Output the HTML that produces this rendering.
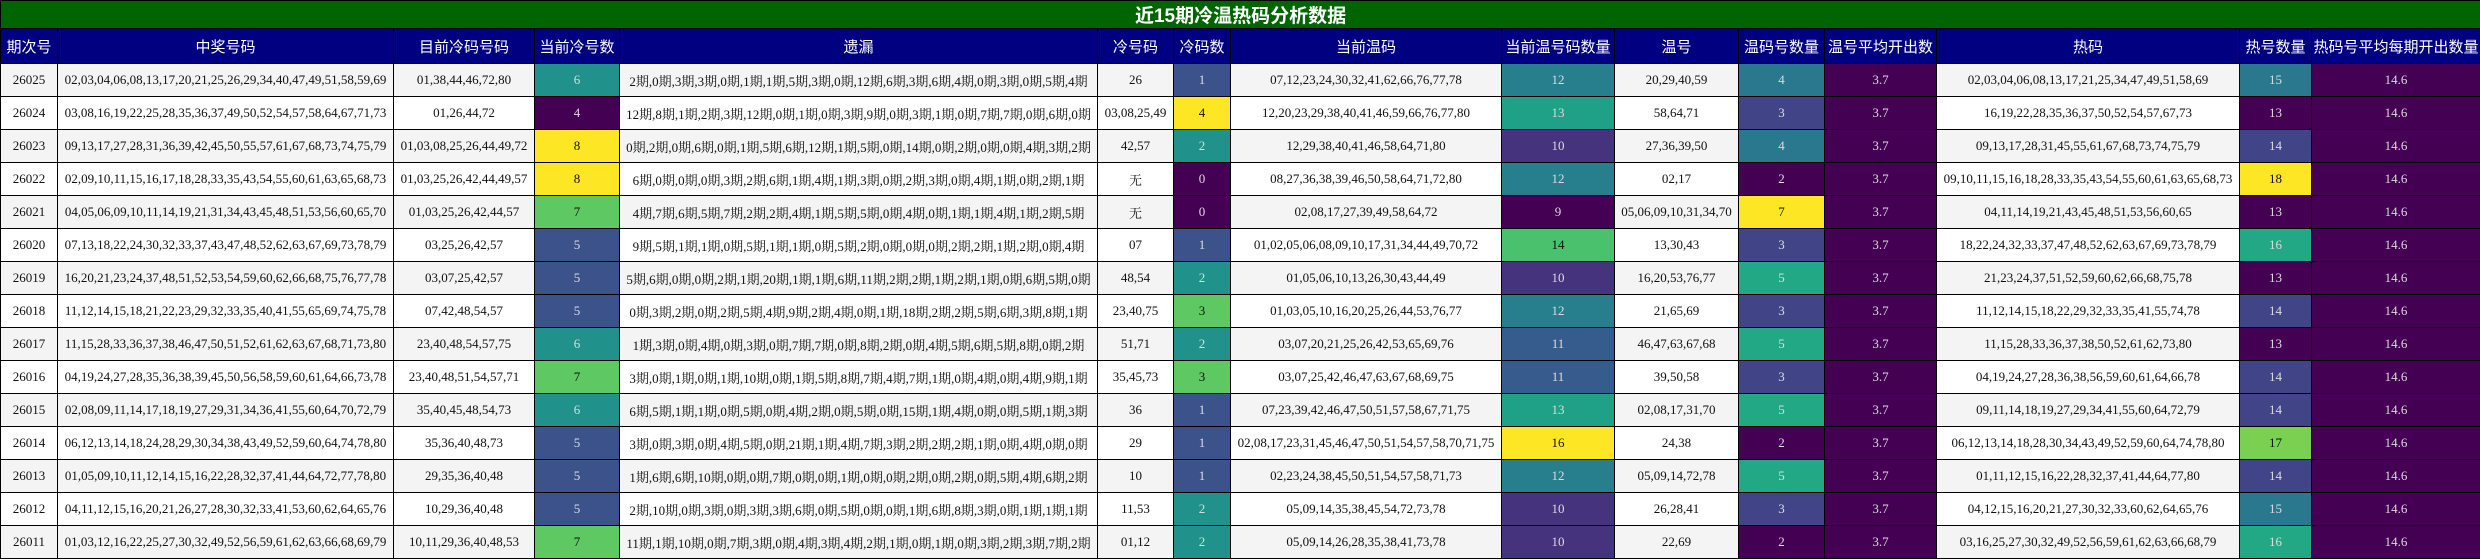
<!DOCTYPE html>
<html><head><meta charset="utf-8">
<style>
html,body{margin:0;padding:0;background:#fff;width:2480px;height:560px;overflow:hidden}
table{border-collapse:collapse;table-layout:fixed;width:2480px}
td,th{border:1px solid #000;padding:0;text-align:center;white-space:nowrap;overflow:hidden}
.tt td{height:27px;background:#006400;color:#fff;font:bold 19px "Liberation Sans","Noto Sans CJK SC",sans-serif}
.hd th{height:34px;background:#000080;color:#fff;font-weight:normal;font-size:15px;font-family:"Liberation Sans","Noto Sans CJK SC",sans-serif}
tbody tr td{height:32px;font-size:13px;font-family:"Liberation Serif","Noto Serif CJK SC",serif;color:#111}
tbody tr:nth-child(odd) td{background:#f4f4f4}
tbody tr:nth-child(even) td{background:#fff}
.p{background:#440154!important}.b{background:#3b528b!important}.t{background:#21918c!important}
.g{background:#5ec962!important}.y{background:#fde725!important}.i{background:#414487!important}
.u{background:#2a788e!important}.e{background:#22a884!important}.l{background:#7ad151!important}
.m{background:#46337e!important}.n{background:#365c8d!important}.o{background:#277f8e!important}
.q{background:#1fa187!important}.r{background:#4ac16d!important}
.p,.b,.t,.i,.u,.e,.m,.n,.o,.q{color:#dcdcdc!important}
</style></head><body>
<table>
<colgroup><col style="width:57px"><col style="width:336px"><col style="width:141px"><col style="width:85px"><col style="width:478px"><col style="width:76px"><col style="width:57px"><col style="width:271px"><col style="width:113px"><col style="width:124px"><col style="width:86px"><col style="width:112px"><col style="width:303px"><col style="width:72px"><col style="width:169px"></colgroup>
<thead>
<tr class="tt"><td colspan="15">近15期冷温热码分析数据</td></tr>
<tr class="hd"><th>期次号</th><th>中奖号码</th><th>目前冷码号码</th><th>当前冷号数</th><th>遗漏</th><th>冷号码</th><th>冷码数</th><th>当前温码</th><th>当前温号码数量</th><th>温号</th><th>温码号数量</th><th>温号平均开出数</th><th>热码</th><th>热号数量</th><th>热码号平均每期开出数量</th></tr>
</thead>
<tbody>
<tr><td>26025</td><td>02,03,04,06,08,13,17,20,21,25,26,29,34,40,47,49,51,58,59,69</td><td>01,38,44,46,72,80</td><td class="t">6</td><td>2期,0期,3期,3期,0期,1期,1期,5期,3期,0期,12期,6期,3期,6期,4期,0期,3期,0期,5期,4期</td><td>26</td><td class="b">1</td><td>07,12,23,24,30,32,41,62,66,76,77,78</td><td class="o">12</td><td>20,29,40,59</td><td class="u">4</td><td class="p">3.7</td><td>02,03,04,06,08,13,17,21,25,34,47,49,51,58,69</td><td class="u">15</td><td class="p">14.6</td></tr>
<tr><td>26024</td><td>03,08,16,19,22,25,28,35,36,37,49,50,52,54,57,58,64,67,71,73</td><td>01,26,44,72</td><td class="p">4</td><td>12期,8期,1期,2期,3期,12期,0期,1期,0期,3期,9期,0期,3期,1期,0期,7期,7期,0期,6期,0期</td><td>03,08,25,49</td><td class="y">4</td><td>12,20,23,29,38,40,41,46,59,66,76,77,80</td><td class="q">13</td><td>58,64,71</td><td class="i">3</td><td class="p">3.7</td><td>16,19,22,28,35,36,37,50,52,54,57,67,73</td><td class="p">13</td><td class="p">14.6</td></tr>
<tr><td>26023</td><td>09,13,17,27,28,31,36,39,42,45,50,55,57,61,67,68,73,74,75,79</td><td>01,03,08,25,26,44,49,72</td><td class="y">8</td><td>0期,2期,0期,6期,0期,1期,5期,6期,12期,1期,5期,0期,14期,0期,2期,0期,0期,4期,3期,2期</td><td>42,57</td><td class="t">2</td><td>12,29,38,40,41,46,58,64,71,80</td><td class="m">10</td><td>27,36,39,50</td><td class="u">4</td><td class="p">3.7</td><td>09,13,17,28,31,45,55,61,67,68,73,74,75,79</td><td class="i">14</td><td class="p">14.6</td></tr>
<tr><td>26022</td><td>02,09,10,11,15,16,17,18,28,33,35,43,54,55,60,61,63,65,68,73</td><td>01,03,25,26,42,44,49,57</td><td class="y">8</td><td>6期,0期,0期,0期,3期,2期,6期,1期,4期,1期,3期,0期,2期,3期,0期,4期,1期,0期,2期,1期</td><td>无</td><td class="p">0</td><td>08,27,36,38,39,46,50,58,64,71,72,80</td><td class="o">12</td><td>02,17</td><td class="p">2</td><td class="p">3.7</td><td>09,10,11,15,16,18,28,33,35,43,54,55,60,61,63,65,68,73</td><td class="y">18</td><td class="p">14.6</td></tr>
<tr><td>26021</td><td>04,05,06,09,10,11,14,19,21,31,34,43,45,48,51,53,56,60,65,70</td><td>01,03,25,26,42,44,57</td><td class="g">7</td><td>4期,7期,6期,5期,7期,2期,2期,4期,1期,5期,5期,0期,4期,0期,1期,1期,4期,1期,2期,5期</td><td>无</td><td class="p">0</td><td>02,08,17,27,39,49,58,64,72</td><td class="p">9</td><td>05,06,09,10,31,34,70</td><td class="y">7</td><td class="p">3.7</td><td>04,11,14,19,21,43,45,48,51,53,56,60,65</td><td class="p">13</td><td class="p">14.6</td></tr>
<tr><td>26020</td><td>07,13,18,22,24,30,32,33,37,43,47,48,52,62,63,67,69,73,78,79</td><td>03,25,26,42,57</td><td class="b">5</td><td>9期,5期,1期,1期,0期,5期,1期,1期,0期,5期,2期,0期,0期,0期,2期,2期,1期,2期,0期,4期</td><td>07</td><td class="b">1</td><td>01,02,05,06,08,09,10,17,31,34,44,49,70,72</td><td class="r">14</td><td>13,30,43</td><td class="i">3</td><td class="p">3.7</td><td>18,22,24,32,33,37,47,48,52,62,63,67,69,73,78,79</td><td class="e">16</td><td class="p">14.6</td></tr>
<tr><td>26019</td><td>16,20,21,23,24,37,48,51,52,53,54,59,60,62,66,68,75,76,77,78</td><td>03,07,25,42,57</td><td class="b">5</td><td>5期,6期,0期,0期,2期,1期,20期,1期,1期,6期,11期,2期,2期,1期,2期,1期,0期,6期,5期,0期</td><td>48,54</td><td class="t">2</td><td>01,05,06,10,13,26,30,43,44,49</td><td class="m">10</td><td>16,20,53,76,77</td><td class="e">5</td><td class="p">3.7</td><td>21,23,24,37,51,52,59,60,62,66,68,75,78</td><td class="p">13</td><td class="p">14.6</td></tr>
<tr><td>26018</td><td>11,12,14,15,18,21,22,23,29,32,33,35,40,41,55,65,69,74,75,78</td><td>07,42,48,54,57</td><td class="b">5</td><td>0期,3期,2期,0期,2期,5期,4期,9期,2期,4期,0期,1期,18期,2期,2期,5期,6期,3期,8期,1期</td><td>23,40,75</td><td class="g">3</td><td>01,03,05,10,16,20,25,26,44,53,76,77</td><td class="o">12</td><td>21,65,69</td><td class="i">3</td><td class="p">3.7</td><td>11,12,14,15,18,22,29,32,33,35,41,55,74,78</td><td class="i">14</td><td class="p">14.6</td></tr>
<tr><td>26017</td><td>11,15,28,33,36,37,38,46,47,50,51,52,61,62,63,67,68,71,73,80</td><td>23,40,48,54,57,75</td><td class="t">6</td><td>1期,3期,0期,4期,0期,3期,0期,7期,7期,0期,8期,2期,0期,4期,5期,6期,5期,8期,0期,2期</td><td>51,71</td><td class="t">2</td><td>03,07,20,21,25,26,42,53,65,69,76</td><td class="n">11</td><td>46,47,63,67,68</td><td class="e">5</td><td class="p">3.7</td><td>11,15,28,33,36,37,38,50,52,61,62,73,80</td><td class="p">13</td><td class="p">14.6</td></tr>
<tr><td>26016</td><td>04,19,24,27,28,35,36,38,39,45,50,56,58,59,60,61,64,66,73,78</td><td>23,40,48,51,54,57,71</td><td class="g">7</td><td>3期,0期,1期,0期,1期,10期,0期,1期,5期,8期,7期,4期,7期,1期,0期,4期,0期,4期,9期,1期</td><td>35,45,73</td><td class="g">3</td><td>03,07,25,42,46,47,63,67,68,69,75</td><td class="n">11</td><td>39,50,58</td><td class="i">3</td><td class="p">3.7</td><td>04,19,24,27,28,36,38,56,59,60,61,64,66,78</td><td class="i">14</td><td class="p">14.6</td></tr>
<tr><td>26015</td><td>02,08,09,11,14,17,18,19,27,29,31,34,36,41,55,60,64,70,72,79</td><td>35,40,45,48,54,73</td><td class="t">6</td><td>6期,5期,1期,1期,0期,5期,0期,4期,2期,0期,5期,0期,15期,1期,4期,0期,0期,5期,1期,3期</td><td>36</td><td class="b">1</td><td>07,23,39,42,46,47,50,51,57,58,67,71,75</td><td class="q">13</td><td>02,08,17,31,70</td><td class="e">5</td><td class="p">3.7</td><td>09,11,14,18,19,27,29,34,41,55,60,64,72,79</td><td class="i">14</td><td class="p">14.6</td></tr>
<tr><td>26014</td><td>06,12,13,14,18,24,28,29,30,34,38,43,49,52,59,60,64,74,78,80</td><td>35,36,40,48,73</td><td class="b">5</td><td>3期,0期,3期,0期,4期,5期,0期,21期,1期,4期,7期,3期,2期,2期,2期,1期,0期,4期,0期,0期</td><td>29</td><td class="b">1</td><td>02,08,17,23,31,45,46,47,50,51,54,57,58,70,71,75</td><td class="y">16</td><td>24,38</td><td class="p">2</td><td class="p">3.7</td><td>06,12,13,14,18,28,30,34,43,49,52,59,60,64,74,78,80</td><td class="l">17</td><td class="p">14.6</td></tr>
<tr><td>26013</td><td>01,05,09,10,11,12,14,15,16,22,28,32,37,41,44,64,72,77,78,80</td><td>29,35,36,40,48</td><td class="b">5</td><td>1期,6期,6期,10期,0期,0期,7期,0期,0期,1期,0期,0期,2期,0期,2期,0期,5期,4期,6期,2期</td><td>10</td><td class="b">1</td><td>02,23,24,38,45,50,51,54,57,58,71,73</td><td class="o">12</td><td>05,09,14,72,78</td><td class="e">5</td><td class="p">3.7</td><td>01,11,12,15,16,22,28,32,37,41,44,64,77,80</td><td class="i">14</td><td class="p">14.6</td></tr>
<tr><td>26012</td><td>04,11,12,15,16,20,21,26,27,28,30,32,33,41,53,60,62,64,65,76</td><td>10,29,36,40,48</td><td class="b">5</td><td>2期,10期,0期,3期,0期,3期,3期,6期,0期,5期,0期,0期,1期,6期,8期,3期,0期,1期,1期,1期</td><td>11,53</td><td class="t">2</td><td>05,09,14,35,38,45,54,72,73,78</td><td class="m">10</td><td>26,28,41</td><td class="i">3</td><td class="p">3.7</td><td>04,12,15,16,20,21,27,30,32,33,60,62,64,65,76</td><td class="u">15</td><td class="p">14.6</td></tr>
<tr><td>26011</td><td>01,03,12,16,22,25,27,30,32,49,52,56,59,61,62,63,66,68,69,79</td><td>10,11,29,36,40,48,53</td><td class="g">7</td><td>11期,1期,10期,0期,7期,3期,0期,4期,3期,4期,2期,1期,0期,1期,0期,3期,2期,3期,7期,2期</td><td>01,12</td><td class="t">2</td><td>05,09,14,26,28,35,38,41,73,78</td><td class="m">10</td><td>22,69</td><td class="p">2</td><td class="p">3.7</td><td>03,16,25,27,30,32,49,52,56,59,61,62,63,66,68,79</td><td class="e">16</td><td class="p">14.6</td></tr>
</tbody>
</table>
</body></html>
